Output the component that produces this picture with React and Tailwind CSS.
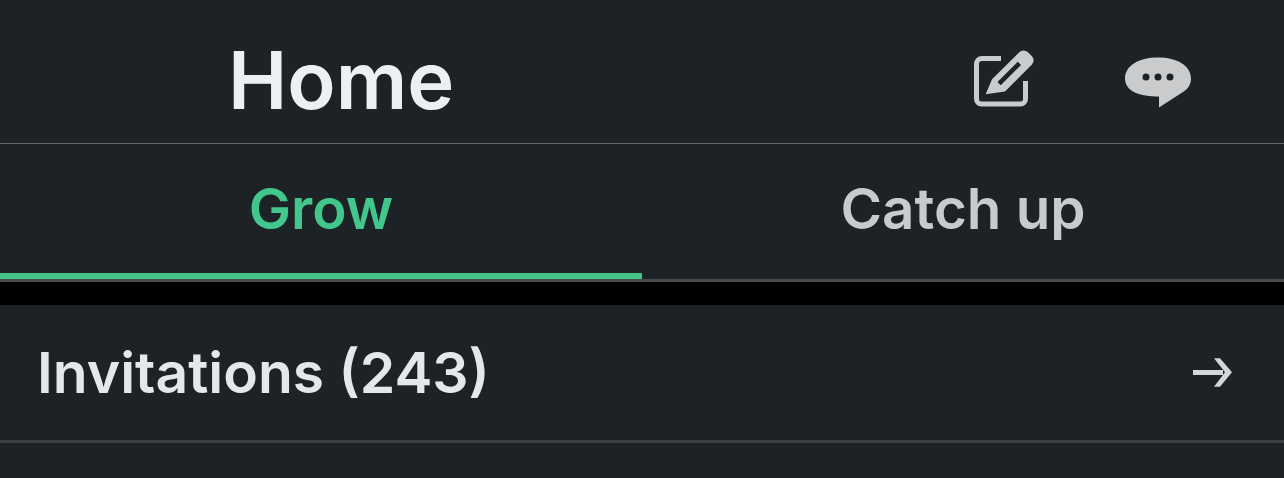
export default function App() {
  return (
    <div className="w-[1284px] h-[478px] overflow-hidden bg-[#1d2226] font-['Inter','Liberation_Sans',sans-serif]">
      <header className="h-[143px] flex items-center pl-[228px] pr-[92px]">
        <h1 className="text-[79.500px] leading-none font-semibold text-[#eeeff0] mt-[18px]">Home</h1>
        <div className="ml-auto flex items-center gap-[90px] mt-[16px]">
          <svg width="62" height="60" viewBox="973 50 62 60" className="block">
            <path d="M1002 58.5H983a5.5 5.5 0 0 0-5.5 5.5v35a5 5 0 0 0 5 5h39a5 5 0 0 0 5-5V81" fill="none" stroke="#c9cbcd" strokeWidth="5" />
            <path fillRule="evenodd" fill="#c9cbcd" d="M986.7 94.3l6.3-15L1020 52.5a6.5 6.5 0 0 1 9-.3l4 4a6 6 0 0 1 0 8.3L1006 91.5zM998.5 82l3.200 3.200L1022 65l-3.200-3.200z" />
          </svg>
          <svg width="68" height="52" viewBox="1124 58 68 52" className="block mt-[6px]">
            <path fill="#c9cbcd" d="M1158 58.500c19 0 33 8 33 21 0 6-3 10.500-8 13.500l-24 15.500V97.500c-19 0-34-5-34-18s14-21 33-21z" />
            <circle cx="1146" cy="78" r="3.500" fill="#1d2226" />
            <circle cx="1158" cy="78" r="3.500" fill="#1d2226" />
            <circle cx="1170" cy="78" r="3.500" fill="#1d2226" />
          </svg>
        </div>
      </header>
      <div className="h-[1px] bg-[#62666a]" />
      <nav className="flex h-[138px] border-b-[3px] border-[#47494b]">
        <div className="relative w-[642px] flex items-center justify-center text-[56.500px] font-semibold text-[#41c78b] pb-[5px]">
          Grow
          <div className="absolute left-0 right-0 bottom-0 h-[6px] bg-[#43c58a]" />
        </div>
        <div className="flex-1 flex items-center justify-center text-[56.500px] font-semibold text-[#c8cacc] pb-[5px]">Catch up</div>
      </nav>
      <div className="h-[23px] bg-black" />
      <div className="h-[135px] flex items-center pl-[37px] pr-[51px] border-b-[3px] border-[#3a3d40] box-content">
        <span className="text-[57px] font-semibold text-[#e6e7e9]">Invitations (243)</span>
        <svg width="40" height="30" viewBox="1194 358 40 30" className="block ml-auto">
          <path fill="#d3d5d7" d="M1194 370h30v5h-30z" />
          <path fill="#d3d5d7" d="M1215 358.300h6l12 14-12 14.500h-6l11-14.500z" />
        </svg>
      </div>
    </div>
  );
}
